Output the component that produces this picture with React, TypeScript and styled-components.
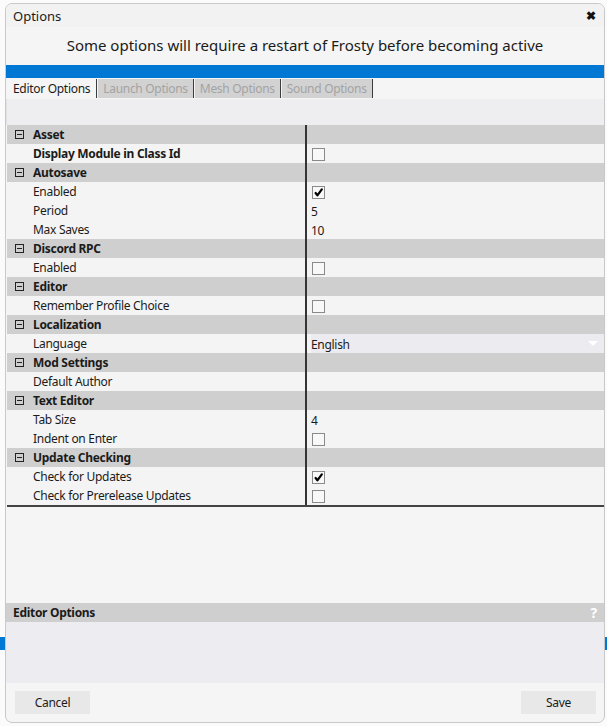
import React from "react";
import styled, { createGlobalStyle } from "styled-components";

const GlobalStyle = createGlobalStyle`
  html, body { margin: 0; padding: 0; }
  body {
    background:
      linear-gradient(to bottom, transparent 637px, #0078d4 637px, #0078d4 650px, transparent 650px),
      #fbfbfb;
    font-family: "Noto Sans", "Open Sans", "Liberation Sans", sans-serif;
    font-size: 12px;
    letter-spacing: -0.3px;
    color: #1b1b1b;
  }
`;

const Page = styled.div`
  padding: 3px 2px 3px 5px;
  height: 726px;
  box-sizing: border-box;
`;

const Dialog = styled.div`
  width: 600px;
  height: 720px;
  box-sizing: border-box;
  border: 1px solid #c9c9c9;
  border-radius: 7px;
  overflow: hidden;
  background: #f5f5f5;
  display: flex;
  flex-direction: column;
`;

const TitleBar = styled.div`
  height: 23px;
  flex: none;
  display: flex;
  align-items: center;
  justify-content: space-between;
  padding: 0 8px 0 7px;
  background: #f2f2f2;
  font-size: 13px;
  letter-spacing: 0;
`;

const CloseGlyph = styled.span`
  font-weight: 700;
  font-size: 12px;
  color: #111;
  line-height: 1;
`;

const Notice = styled.div`
  height: 38px;
  flex: none;
  display: flex;
  align-items: center;
  justify-content: center;
  padding-bottom: 2px;
  box-sizing: border-box;
  font-size: 15px;
  letter-spacing: 0;
  color: #1a1a1a;
`;

const BlueBar = styled.div`
  height: 13px;
  flex: none;
  background: #0078d4;
  margin-bottom: 1px;
`;

const TabStrip = styled.div`
  display: flex;
  height: 19px;
  flex: none;
  padding-left: 1px;
`;

const Tab = styled.div<{ $active?: boolean }>`
  display: flex;
  align-items: center;
  padding: 0 ${(p) => (p.$active ? 6 : 5)}px;
  border-right: 1px solid #3c3c3c;
  margin-right: 1px;
  background: ${(p) => (p.$active ? "#f5f5f5" : "#d2d2d2")};
  color: ${(p) => (p.$active ? "#1b1b1b" : "#a3a3a3")};
`;

const Toolbar = styled.div`
  height: 26px;
  flex: none;
  margin-top: 1px;
  background: #eeeef1;
  border-left: 1px solid #e2e2e6;
`;

const Grid = styled.div`
  flex: none;
  margin-left: 1px;
  border-bottom: 2px solid #444;
`;

const Row = styled.div<{ $category?: boolean }>`
  display: grid;
  grid-template-columns: 298px 1fr;
  height: 19px;
  background: ${(p) => (p.$category ? "#cfcfcf" : "#f4f4f4")};
`;

const NameCell = styled.div<{ $bold?: boolean }>`
  display: flex;
  align-items: center;
  padding: 0 0 1px 26px;
  font-weight: ${(p) => (p.$bold ? 700 : 400)};
  white-space: nowrap;
`;

const CategoryName = styled.div`
  display: flex;
  align-items: center;
  gap: 9px;
  padding: 0 0 1px 8px;
  font-weight: 700;
`;

const MinusBox = styled.span`
  width: 9px;
  height: 9px;
  border: 1px solid #222;
  box-sizing: border-box;
  display: flex;
  align-items: center;
  justify-content: center;
  &::after {
    content: "";
    width: 5px;
    height: 1px;
    background: #222;
  }
`;

const ValueCell = styled.div`
  border-left: 2px solid #353535;
  display: flex;
  align-items: center;
  padding-left: 4px;
  padding-top: 2px;
  box-sizing: border-box;
`;

const CheckBox = styled.span`
  width: 11px;
  height: 11px;
  margin-left: 1px;
  margin-top: -1px;
  border: 1px solid #8a8a8a;
  background: #f8f8f8;
  display: flex;
  align-items: center;
  justify-content: center;
`;

const Combo = styled.div`
  flex: 1;
  align-self: stretch;
  margin-top: -2px;
  background: #ececf0;
  display: flex;
  align-items: center;
  justify-content: space-between;
  padding: 2px 6px 0 0;
`;

const Triangle = styled.span`
  width: 0;
  height: 0;
  border-left: 5px solid transparent;
  border-right: 5px solid transparent;
  border-top: 5px solid #ffffff;
  margin-top: -3px;
`;

const Spacer = styled.div`
  flex: 1;
`;

const DescHeader = styled.div`
  height: 19px;
  flex: none;
  background: #cfcfcf;
  display: flex;
  align-items: center;
  justify-content: space-between;
  padding: 0 7px 1px 7px;
  box-sizing: border-box;
  font-weight: 700;
`;

const Help = styled.span`
  color: #ffffff;
  font-weight: 700;
  font-size: 14px;
`;

const DescBody = styled.div`
  height: 61px;
  flex: none;
  background: #ededf1;
`;

const Footer = styled.div`
  height: 39px;
  flex: none;
  box-sizing: border-box;
  display: flex;
  justify-content: space-between;
  align-items: flex-start;
  padding: 8px 8px 0 9px;
`;

const Button = styled.button`
  width: 75px;
  height: 23px;
  border: none;
  background: #e8e8e8;
  font-family: inherit;
  font-size: 12px;
  letter-spacing: -0.3px;
  color: #1b1b1b;
  padding: 0;
`;

type Value =
  | { kind: "check"; checked: boolean }
  | { kind: "text"; text: string }
  | { kind: "combo"; text: string };

type Item = { label: string; bold?: boolean; value: Value };
type Group = { name: string; items: Item[] };

const groups: Group[] = [
  { name: "Asset", items: [{ label: "Display Module in Class Id", bold: true, value: { kind: "check", checked: false } }] },
  {
    name: "Autosave",
    items: [
      { label: "Enabled", value: { kind: "check", checked: true } },
      { label: "Period", value: { kind: "text", text: "5" } },
      { label: "Max Saves", value: { kind: "text", text: "10" } },
    ],
  },
  { name: "Discord RPC", items: [{ label: "Enabled", value: { kind: "check", checked: false } }] },
  { name: "Editor", items: [{ label: "Remember Profile Choice", value: { kind: "check", checked: false } }] },
  { name: "Localization", items: [{ label: "Language", value: { kind: "combo", text: "English" } }] },
  { name: "Mod Settings", items: [{ label: "Default Author", value: { kind: "text", text: "" } }] },
  {
    name: "Text Editor",
    items: [
      { label: "Tab Size", value: { kind: "text", text: "4" } },
      { label: "Indent on Enter", value: { kind: "check", checked: false } },
    ],
  },
  {
    name: "Update Checking",
    items: [
      { label: "Check for Updates", value: { kind: "check", checked: true } },
      { label: "Check for Prerelease Updates", value: { kind: "check", checked: false } },
    ],
  },
];

const Check = () => (
  <svg width="9" height="9" viewBox="0 0 9 9">
    <path d="M1.6 5 L3.4 7.3 L7.8 1.3" fill="none" stroke="#000" strokeWidth="2.2" strokeLinejoin="round" strokeLinecap="round" />
  </svg>
);

const ValueView = ({ v }: { v: Value }) => {
  if (v.kind === "check") return <CheckBox>{v.checked && <Check />}</CheckBox>;
  if (v.kind === "combo")
    return (
      <Combo>
        <span>{v.text}</span>
        <Triangle />
      </Combo>
    );
  return <span>{v.text}</span>;
};

export default function App() {
  const tabs = ["Editor Options", "Launch Options", "Mesh Options", "Sound Options"];
  return (
    <>
      <GlobalStyle />
      <Page>
        <Dialog>
          <TitleBar>
            <span>Options</span>
            <CloseGlyph>✖</CloseGlyph>
          </TitleBar>
          <Notice>Some options will require a restart of Frosty before becoming active</Notice>
          <BlueBar />
          <TabStrip>
            {tabs.map((t, i) => (
              <Tab key={t} $active={i === 0}>
                {t}
              </Tab>
            ))}
          </TabStrip>
          <Toolbar />
          <Grid>
            {groups.map((g) => (
              <React.Fragment key={g.name}>
                <Row $category>
                  <CategoryName>
                    <MinusBox />
                    {g.name}
                  </CategoryName>
                  <ValueCell />
                </Row>
                {g.items.map((it) => (
                  <Row key={g.name + it.label}>
                    <NameCell $bold={it.bold}>{it.label}</NameCell>
                    <ValueCell>
                      <ValueView v={it.value} />
                    </ValueCell>
                  </Row>
                ))}
              </React.Fragment>
            ))}
          </Grid>
          <Spacer />
          <DescHeader>
            <span>Editor Options</span>
            <Help>?</Help>
          </DescHeader>
          <DescBody />
          <Footer>
            <Button>Cancel</Button>
            <Button>Save</Button>
          </Footer>
        </Dialog>
      </Page>
    </>
  );
}
